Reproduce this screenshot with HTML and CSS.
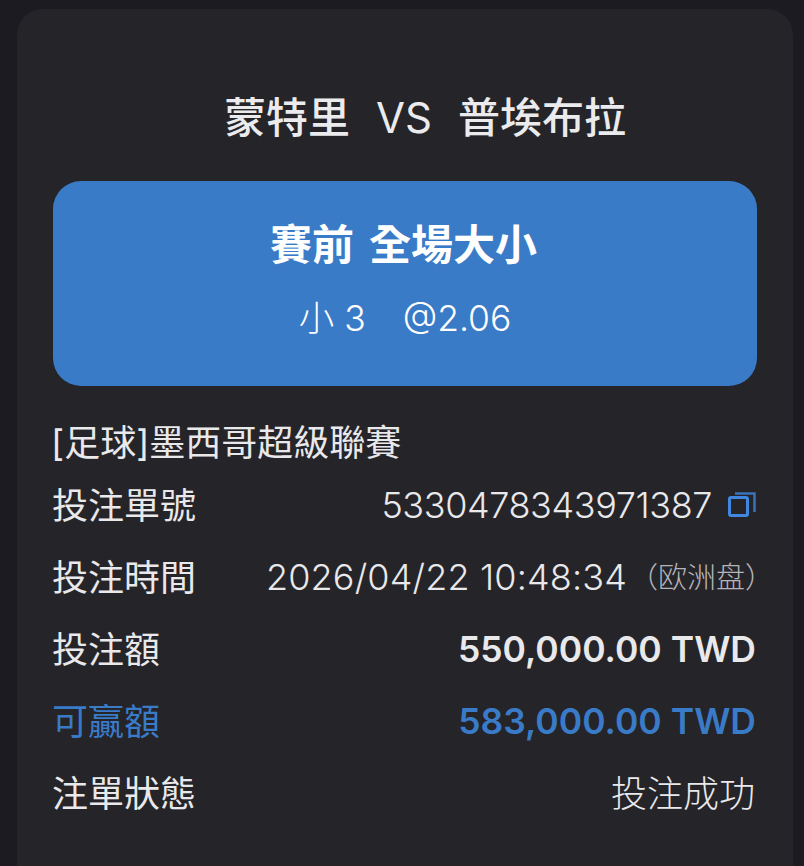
FILE: index.html
```html
<!DOCTYPE html>
<html lang="zh-Hant">
<head>
  <meta charset="UTF-8" />
  <meta name="viewport" content="width=device-width, initial-scale=1.0"/>
  <title>注單詳情</title>
  <link rel="stylesheet" href="styles.css">
</head>
<body>

  <main class="ticket">
    <h1 class="match">蒙特里<span class="vs">VS</span>普埃布拉</h1>

    <div class="market">
      <h2>賽前 全場大小</h2>
      <p><span class="pick">小 3</span>@2.06</p>
    </div>

    <div class="league">[足球]墨西哥超級聯賽</div>

    <div class="row">
      <span>投注單號</span>
      <span class="value">
        <span class="digits bet-id">5330478343971387</span>
        <svg class="copy" width="28" height="26" viewBox="0 0 28 26" fill="none">
          <path d="M7 1.5H26.5V20" stroke="#3f87e0" stroke-width="2.5" opacity="0.8"/>
          <rect x="1.5" y="5.5" width="18" height="18" rx="1.5" stroke="#3f87e0" stroke-width="3"/>
        </svg>
      </span>
    </div>
    <div class="row">
      <span>投注時間</span>
      <span class="value">
        <span class="digits bet-time">2026/04/22 10:48:34</span>
        <span class="odds-type">（欧洲盘）</span>
      </span>
    </div>
    <div class="row">
      <span>投注額</span>
      <span class="value strong"><span class="digits">550,000.00 TWD</span></span>
    </div>
    <div class="row win">
      <span>可贏額</span>
      <span class="value strong"><span class="digits">583,000.00 TWD</span></span>
    </div>
    <div class="row">
      <span>注單狀態</span>
      <span class="value status">投注成功</span>
    </div>
  </main>

</body>
</html>
```

FILE: styles.css
```css
body {
  margin: 0;
  height: 866px;
  overflow: hidden;
  background: #1b1b21;
  font-family: Inter, "Noto Sans CJK TC", sans-serif;
  color: #e9e9ec;
}

.ticket {
  margin: 9px 11px 0 17px;
  padding: 0 36px;
  height: 857px;
  box-sizing: border-box;
  background: #252429;
  border-radius: 26px 26px 0 0;
}

.match {
  margin: 0;
  padding: 81px 0 0 40px;
  height: 91px;
  line-height: 56px;
  text-align: center;
  font-size: 42px;
  font-weight: 500;
  color: #ebebee;
}

.vs {
  margin: 0 26px;
  font-size: 42px;
  font-weight: 400;
}

.market {
  height: 205px;
  background: #3a7bc8;
  border-radius: 28px;
  text-align: center;
  color: #fff;
  box-sizing: border-box;
  padding-top: 37px;
}

.market h2 {
  margin: 0;
  padding-right: 3px;
  font-size: 42px;
  font-weight: 700;
  line-height: 54px;
  word-spacing: 5px;
}

.market p {
  margin: 25px 0 0;
  font-size: 35.5px;
  line-height: 44px;
  font-weight: 300;
}

.pick {
  margin-right: 37px;
}

.league {
  margin-top: 33px;
  font-size: 36px;
  line-height: 48px;
  margin-left: -2px;
  color: #e9e9ec;
}

.row {
  display: flex;
  justify-content: space-between;
  align-items: center;
  height: 72px;
  margin-left: -1px;
  padding-right: 1px;
  font-size: 36px;
}

.value {
  display: flex;
  align-items: center;
  font-weight: 300;
}

.digits {
  padding-top: 4px;
}

.bet-id {
  letter-spacing: -0.4px;
}

.bet-time {
  margin-right: 2px;
  letter-spacing: 0.15px;
}

.copy {
  margin: 4px 0 0 16px;
}

.odds-type {
  font-size: 29px;
  color: #b5b5b9;
  margin-right: -18px;
}

.strong {
  font-size: 35.5px;
  font-weight: 600;
}

.status {
  margin-right: 1px;
}

.win {
  color: #3a7bc8;
}
```
